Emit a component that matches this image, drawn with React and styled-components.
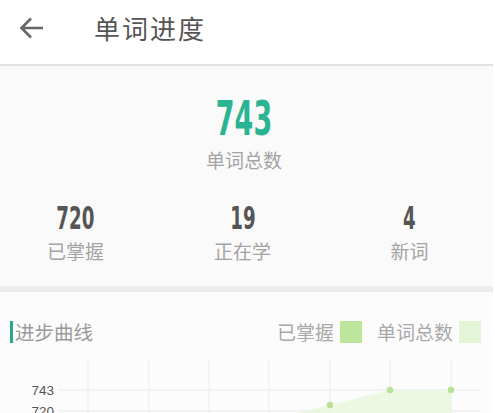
import React from "react";
import styled, { createGlobalStyle } from "styled-components";

const Global = createGlobalStyle`
  html, body { margin: 0; padding: 0; background: #ffffff; }
  body { font-family: "Noto Sans CJK SC", "Liberation Sans", sans-serif; overflow: hidden; }
`;

const Page = styled.div`
  width: 493px;
  background: #fcfcfc;
`;

const Header = styled.header`
  height: 64px;
  display: flex;
  align-items: center;
  background: #ffffff;
  border-bottom: 2px solid #e2e2e2;
`;

const BackButton = styled.div`
  width: 26px;
  height: 26px;
  margin-left: 19px;
  margin-top: -9px;
  display: flex;
  align-items: center;
  justify-content: center;
`;

const Title = styled.h1`
  margin: -10px 0 0 49px;
  font-size: 26px;
  font-weight: 400;
  color: #555555;
  letter-spacing: 2px;
`;

const Summary = styled.section`
  background: #fafafa;
  padding: 32px 5px 0 0;
  height: 188px;
  border-bottom: 6px solid #ececec;
`;

const BigNumber = styled.div`
  text-align: center;
  font-family: "DejaVu Sans Condensed", "Liberation Sans", sans-serif;
  font-weight: 700;
  font-size: ${(p) => p.$size}px;
  line-height: 1;
  color: ${(p) => p.$color};
  transform: scale(0.75, ${(p) => p.$stretch});
`;

const Label = styled.div`
  text-align: center;
  font-size: 19px;
  color: #a3a3a3;
  line-height: 1;
  margin-top: ${(p) => p.$gap}px;
`;

const StatsRow = styled.div`
  display: grid;
  grid-template-columns: repeat(3, 1fr);
  width: 501px;
  margin: 34.5px 0 0 -8px;
`;

const Stat = styled.div`
  display: flex;
  flex-direction: column;
  align-items: center;
`;

const ChartSection = styled.section`
  background: #fcfcfc;
  padding-top: 29px;
`;

const ChartHead = styled.div`
  display: flex;
  align-items: center;
  padding: 0 12px 0 10px;
`;

const ChartTitle = styled.div`
  display: flex;
  align-items: center;
  font-size: 19.5px;
  color: #9a9a9a;
  line-height: 22px;
  &::before {
    content: "";
    width: 3px;
    height: 22px;
    background: #2aa98a;
    margin-right: 2px;
  }
`;

const Legend = styled.div`
  margin-left: auto;
  display: flex;
  align-items: center;
`;

const LegendText = styled.span`
  font-size: 19px;
  color: #a8a8a8;
  line-height: 22px;
  margin-left: ${(p) => p.$gap}px;
`;

const Swatch = styled.span`
  width: 22px;
  height: 22px;
  background: ${(p) => p.$color};
  margin-left: 6px;
`;

const ChartBox = styled.div`
  margin-top: 15px;
  height: 200px;
`;

const xs = [88, 149, 209, 269, 330, 390, 451];
const yLabels = [
  { v: "743", y: 32 },
  { v: "720", y: 53 },
  { v: "700", y: 74 },
];

function Chart() {
  return (
    <svg width="493" height="200" viewBox="0 0 493 200">
      {xs.map((x) => (
        <line key={x} x1={x} y1="2" x2={x} y2="200" stroke="#ececec" strokeWidth="1" />
      ))}
      {yLabels.map((l) => (
        <g key={l.v}>
          <line x1="58" y1={l.y} x2="481" y2={l.y} stroke="#e8e8e8" strokeWidth="1" />
          <text
            x="54"
            y={l.y + 5}
            textAnchor="end"
            fontSize="13.5"
            fill="#555"
            fontFamily="Liberation Sans, sans-serif"
          >
            {l.v}
          </text>
        </g>
      ))}
      <polygon
        points="269,62 330,47 390,32 451,32 451,200 269,200"
        fill="#e8f6dc"
        fillOpacity="0.8"
      />
      {[
        [330, 47],
        [390, 32],
        [451, 32],
      ].map(([x, y]) => (
        <circle key={x} cx={x} cy={y} r="3.2" fill="#b8e297" />
      ))}
    </svg>
  );
}

function ArrowLeft() {
  return (
    <svg width="26" height="24" viewBox="0 0 26 24" fill="none">
      <path
        d="M24 12H3M12 2.5L2.5 12L12 21.5"
        stroke="#666"
        strokeWidth="2.6"
        strokeLinecap="butt"
        strokeLinejoin="miter"
      />
    </svg>
  );
}

export default function App() {
  return (
    <Page>
      <Global />
      <Header>
        <BackButton>
          <ArrowLeft />
        </BackButton>
        <Title>单词进度</Title>
      </Header>
      <Summary>
        <BigNumber $size={40} $color="#2bb492" $stretch={1.2}>743</BigNumber>
        <Label $gap={12}>单词总数</Label>
        <StatsRow>
          <Stat>
            <BigNumber $size={27} $color="#555" $stretch={1.17}>720</BigNumber>
            <Label $gap={10.5}>已掌握</Label>
          </Stat>
          <Stat>
            <BigNumber $size={27} $color="#555" $stretch={1.17}>19</BigNumber>
            <Label $gap={10.5}>正在学</Label>
          </Stat>
          <Stat>
            <BigNumber $size={27} $color="#555" $stretch={1.17}>4</BigNumber>
            <Label $gap={10.5}>新词</Label>
          </Stat>
        </StatsRow>
      </Summary>
      <ChartSection>
        <ChartHead>
          <ChartTitle>进步曲线</ChartTitle>
          <Legend>
            <LegendText $gap={0}>已掌握</LegendText>
            <Swatch $color="#bce69b" />
            <LegendText $gap={15}>单词总数</LegendText>
            <Swatch $color="#e3f5d6" />
          </Legend>
        </ChartHead>
        <ChartBox>
          <Chart />
        </ChartBox>
      </ChartSection>
    </Page>
  );
}
